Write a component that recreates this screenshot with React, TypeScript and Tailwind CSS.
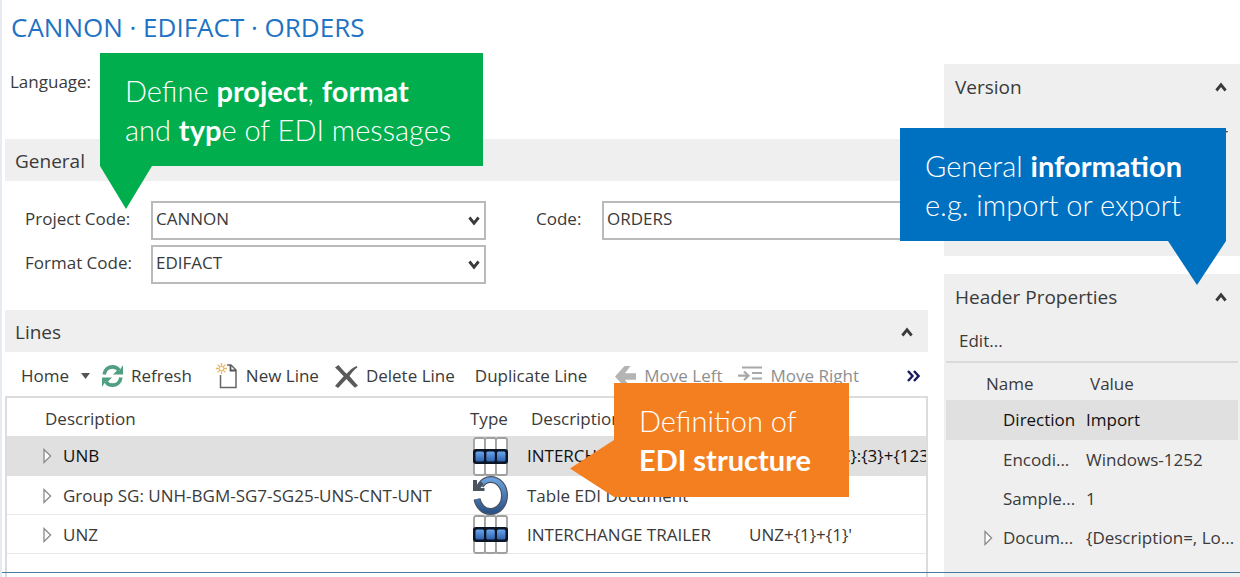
import React from 'react';

const SECTION = 'flex h-[42px] items-center justify-between bg-[#efefef] text-[19px] leading-[26px]';
const TOOL = 'flex items-center gap-2 whitespace-nowrap';
const CALLOUT = "absolute pt-[18px] pl-[25px] font-['Lato',sans-serif] text-[29px] leading-[39px] font-light whitespace-nowrap text-white";

const Chevron: React.FC<{ down?: boolean }> = ({ down }) => (
  <svg
    width="12"
    height="10"
    viewBox="0 0 12 10"
    fill="none"
    stroke="#3a3a3a"
    strokeWidth="2.8"
    className={down ? 'rotate-180' : ''}
  >
    <path d="M1.400 8.500 6 2.800l4.600 5.700" />
  </svg>
);

const Expander: React.FC = () => (
  <svg width="9" height="16" viewBox="0 0 9 16" fill="#fff" stroke="#8a8a8a" strokeWidth="1.3">
    <path d="M1 1.5 7.6 8 1 14.5Z" />
  </svg>
);

const RefreshIcon: React.FC = () => (
  <svg width="21" height="24" viewBox="0 0 22 24" fill="none" stroke="#4f9f80" strokeWidth="3.8">
    <path d="M2.200 10.500C3 5 7 2.400 11 2.400c3 0 5.400 1.300 7 3.900" />
    <path d="M19.800 13.500C19 19 15 21.600 11 21.600c-3 0-5.400-1.300-7-3.900" />
    <path d="M22 .5v10h-10.500l3.800-3.800 3-.5Z" fill="#4f9f80" stroke="none" />
    <path d="M0 23.500v-10h10.500l-3.800 3.800-3 .5Z" fill="#4f9f80" stroke="none" />
  </svg>
);

const NewIcon: React.FC = () => (
  <svg width="22" height="26" viewBox="0 0 22 26" fill="none">
    <path d="M4.500 12v12.500h15.500V7l-5-5h-4" stroke="#666" strokeWidth="1.500" />
    <path d="M14.500 2v5.500H20" stroke="#555" strokeWidth="1.800" />
    <path d="M5.500 0v11M0 5.500h11M1.600 1.600l7.800 7.800M9.400 1.600l-7.800 7.800" stroke="#eab765" strokeWidth="1.300" />
    <circle cx="5.500" cy="5.500" r="2.200" fill="#fff" stroke="#eab765" />
  </svg>
);

const DeleteIcon: React.FC = () => (
  <svg width="23" height="23" viewBox="0 0 23 23" fill="#5a5a5a">
    <path d="M3.500 0C7 4 9 6.500 11.600 8.800 14.500 5.500 17.500 2.800 21.500 1l1 1.200c-3.500 2.800-6 5.600-8 8.800 2.600 3 5 6 8.500 9.500L20 22.800c-3.500-3-6-6-8.500-8.800-3 3-5.500 6-8.300 9L0 21c2.700-3.300 5.500-6.300 8.700-9.700C6 8.500 3.500 5.500 0 2.500Z" />
  </svg>
);

const MoveLeftIcon: React.FC = () => (
  <svg width="21" height="21" viewBox="0 0 21 21" fill="#b4b4b4">
    <path d="M0 10.500 9.500 0h6L10 7.300h11v6.400H10l5.500 7.300h-6Z" />
  </svg>
);

const MoveRightIcon: React.FC = () => (
  <svg width="24" height="20" viewBox="0 0 24 20" fill="none" stroke="#a8a8a8" strokeWidth="1.800">
    <path d="M4 1.500h20M14 7h10M14 12.500h10M4 18h20" />
    <path d="M0 9.700h10M6 5.500l4.500 4.200L6 14" strokeWidth="2.200" />
  </svg>
);

const SegmentIcon: React.FC = () => (
  <svg width="35" height="39" viewBox="0 0 35 39">
    <defs>
      <linearGradient id="cell" x1="0" y1="0" x2="0" y2="1">
        <stop offset="0" stopColor="#6aa5ee" />
        <stop offset="1" stopColor="#2f62ad" />
      </linearGradient>
    </defs>
    <g fill="#fff" stroke="#a0a0a0" strokeWidth="1.800">
      <rect x="1" y="1" width="11" height="37" rx="2" />
      <rect x="12" y="1" width="11" height="37" rx="2" />
      <rect x="23" y="1" width="11" height="37" rx="2" />
    </g>
    <rect y="12" width="35" height="15" rx="3" fill="#0b1526" />
    <g fill="url(#cell)">
      <rect x="2.500" y="14.500" width="8.500" height="10" rx="1.500" />
      <rect x="13.300" y="14.500" width="8.500" height="10" rx="1.500" />
      <rect x="24" y="14.500" width="8.500" height="10" rx="1.500" />
    </g>
  </svg>
);

const LoopIcon: React.FC = () => (
  <svg width="35" height="39" viewBox="0 0 35 39" fill="none">
    <defs>
      <linearGradient id="loop" x1="0" y1="0" x2="0" y2="1">
        <stop offset="0" stopColor="#6ba0dd" />
        <stop offset="1" stopColor="#2c5389" />
      </linearGradient>
    </defs>
    <path d="M7.500 9.500C10.500 5 14 3.500 17.500 3.500c8 0 14 7 14 16s-6 16-14 16c-6.500 0-12-5-13.500-12.500" stroke="#4a5360" strokeWidth="7" />
    <path d="M7.500 9.500C10.500 5 14 3.500 17.500 3.500c8 0 14 7 14 16s-6 16-14 16c-6.500 0-12-5-13.500-12.500" stroke="url(#loop)" strokeWidth="4.600" />
    <path d="M0 4v11h11.500v-3H7.500l3-4-2.500-2.500L4 8.500V4Z" fill="#4a5360" />
  </svg>
);

const lines = [
  { name: 'UNB', icon: <SegmentIcon />, description: 'INTERCHANGE', text: 'UNB+{UNOC}:{3}+{123', selected: true },
  { name: 'Group SG: UNH-BGM-SG7-SG25-UNS-CNT-UNT', icon: <LoopIcon />, description: 'Table EDI Document', text: '' },
  { name: 'UNZ', icon: <SegmentIcon />, description: 'INTERCHANGE TRAILER', text: "UNZ+{1}+{1}'" },
];

const properties = [
  { name: 'Direction', value: 'Import', selected: true },
  { name: 'Encodi...', value: 'Windows-1252' },
  { name: 'Sample...', value: '1' },
  { name: 'Docum...', value: '{Description=, Lo...', expandable: true },
];

const SelectField: React.FC<{ id: string; label: string; value: string }> = ({ id, label, value }) => (
  <>
    <label htmlFor={id} className="pb-1">{label}</label>
    <div className="relative">
      <select
        id={id}
        defaultValue={value}
        className="block h-[39px] w-full appearance-none border-2 border-[#bababa] bg-white px-[3px] pb-1"
      >
        <option>{value}</option>
      </select>
      <span className="pointer-events-none absolute inset-y-0 right-[6px] flex items-center">
        <Chevron down />
      </span>
    </div>
  </>
);

export default function App() {
  return (
    <div className="relative overflow-hidden border-l-2 border-[#e6ebf1] bg-white pl-[3px] font-['Open_Sans','Noto_Sans',sans-serif] text-[17px] leading-[24px] text-[#3a3a3a]">
      <h1 className="h-[64px] pt-2 pl-[6px] text-[26px] leading-[38px] text-[#1e73c4]">
        CANNON · EDIFACT · ORDERS
      </h1>

      <div className="flex gap-4">
        <main className="min-w-0 flex-1">
          <div className="h-[75px] pt-[6px] pl-[5px]">Language:</div>

          {/* General */}
          <section>
            <h2 className={`${SECTION} pt-[2px] pl-[10px]`}>General</h2>
            <div className="flex items-start pt-5 pb-[26px] pl-5">
              <div className="grid w-[461px] grid-cols-[126px_1fr] items-center gap-y-[5px]">
                <SelectField id="project" label="Project Code:" value="CANNON" />
                <SelectField id="format" label="Format Code:" value="EDIFACT" />
              </div>
              <div className="ml-[50px] flex min-w-0 flex-1 items-center pr-5">
                <label htmlFor="code" className="w-[66px] pb-1">Code:</label>
                <input
                  id="code"
                  defaultValue="ORDERS"
                  className="h-[39px] min-w-0 flex-1 border-2 border-[#bababa] px-[3px] pb-1"
                />
              </div>
            </div>
          </section>

          {/* Lines */}
          <section>
            <div className={`${SECTION} pt-[2px] pr-[15px] pl-[10px]`}>
              <h2>Lines</h2>
              <button aria-label="Collapse lines"><Chevron /></button>
            </div>
            <div className="flex h-[44px] items-center pt-1 pr-2 pl-4">
              <button className={`${TOOL} gap-3`}>
                <span>Home</span>
                <svg width="9" height="6" viewBox="0 0 9 6" fill="#555"><path d="M0 0h9L4.500 6Z" /></svg>
              </button>
              <button className={`${TOOL} ml-3`}><RefreshIcon />Refresh</button>
              <button className={`${TOOL} ml-6`}><NewIcon />New Line</button>
              <button className={`${TOOL} ml-4`}><DeleteIcon />Delete Line</button>
              <button className={`${TOOL} ml-5`}>Duplicate Line</button>
              <button className={`${TOOL} ml-7 text-[#8f8f8f]`}><MoveLeftIcon />Move Left</button>
              <button className={`${TOOL} ml-4 text-[#8f8f8f]`}><MoveRightIcon />Move Right</button>
              <button aria-label="More actions" className="ml-auto">
                <svg width="13" height="12" viewBox="0 0 13 12" fill="none" stroke="#1a1a5e" strokeWidth="2.400">
                  <path d="M1 1l4.500 5L1 11M7 1l4.500 5L7 11" />
                </svg>
              </button>
            </div>
            <div className="h-[181px] overflow-hidden border-2 border-b-0 border-[#dcdcdc]">
              <table className="w-full table-fixed text-left whitespace-nowrap">
                <colgroup>
                  <col className="w-[456px]" />
                  <col className="w-[58px]" />
                  <col className="w-[222px]" />
                  <col />
                </colgroup>
                <thead>
                  <tr className="h-[38px]">
                    <th className="pt-1 pl-[38px] font-normal">Description</th>
                    <th className="pt-1 pl-[7px] font-normal">Type</th>
                    <th className="pt-1 pl-[10px] font-normal">Description</th>
                    <th></th>
                  </tr>
                </thead>
                <tbody>
                  {lines.map((line) => (
                    <tr
                      key={line.name}
                      className={line.selected ? 'h-[40px] bg-[#e0e0e0] text-[#111]' : 'h-[39px] shadow-[inset_0_-1px_0_#e8e8e8]'}
                    >
                      <td className="p-0 pl-9">
                        <div className="flex items-center gap-[11px]">
                          <Expander />
                          {line.name}
                        </div>
                      </td>
                      <td className="p-0 pl-[10px]">{line.icon}</td>
                      <td className="p-0 pl-[6px]">{line.description}</td>
                      <td className="p-0 pl-[6px]">{line.text}</td>
                    </tr>
                  ))}
                </tbody>
              </table>
            </div>
          </section>
        </main>

        <aside className="flex w-[296px] flex-col gap-[18px]">
          <section className="h-[192px] bg-[#efefef]">
            <div className={`${SECTION} pt-1 pr-[13px] pl-[11px]`}>
              <h2>Version</h2>
              <button aria-label="Collapse version"><Chevron /></button>
            </div>
            <div className="pt-4 pr-3 text-right">Group Number</div>
          </section>

          <section className="flex-1 bg-[#efefef]">
            <div className={`${SECTION} pt-1 pr-[13px] pl-[11px]`}>
              <h2>Header Properties</h2>
              <button aria-label="Collapse header properties"><Chevron /></button>
            </div>
            <div className="flex h-[45px] items-center pt-1 pl-[15px]">
              <button>Edit...</button>
            </div>
            <table className="ml-[2px] w-[292px] table-fixed border-t-2 border-[#dadada] text-left whitespace-nowrap">
              <colgroup>
                <col className="w-[136px]" />
                <col />
              </colgroup>
              <thead>
                <tr className="h-[38px]">
                  <th className="pt-1 pl-10 font-normal">Name</th>
                  <th className="pt-1 pl-2 font-normal">Value</th>
                </tr>
              </thead>
              <tbody>
                {properties.map((property) => (
                  <tr key={property.name} className={property.selected ? 'h-[40px] bg-[#e0e0e0] text-[#111]' : 'h-[39px]'}>
                    <td className="p-0 pl-[38px]">
                      <div className="flex items-center gap-[10px]">
                        {property.expandable ? <Expander /> : <span className="w-[9px]" />}
                        {property.name}
                      </div>
                    </td>
                    <td className="p-0 pl-1">{property.value}</td>
                  </tr>
                ))}
              </tbody>
            </table>
          </section>
        </aside>
      </div>

      <div className="absolute inset-x-0 bottom-[4px] h-px bg-[#4a7a9c]" />

      {/* Callouts */}
      <div className={`${CALLOUT} top-[53px] left-[98px] h-[113px] w-[383px] bg-[#00ae4d]`}>
        Define <b className="font-bold">project</b>, <b className="font-bold">format</b>
        <br />
        and <b className="font-bold">typ</b>e of EDI messages
        <span className="absolute top-full left-0 h-[43px] w-[52px] bg-[#00ae4d] [clip-path:polygon(0_0,100%_0,50%_100%)]" />
      </div>
      <div className={`${CALLOUT} top-[128px] right-[14px] h-[113px] w-[326px] bg-[#0070c0]`}>
        General <b className="font-bold">information</b>
        <br />
        e.g. import or export
        <span className="absolute top-full right-0 h-[44px] w-[58px] bg-[#0070c0] [clip-path:polygon(0_0,100%_0,50%_100%)]" />
      </div>
      <div className={`${CALLOUT} top-[383px] left-[612px] h-[114px] w-[235px] bg-[#f47f20]`}>
        Definition of
        <br />
        <b className="font-bold">EDI structure</b>
        <span className="absolute right-full bottom-0 h-[57px] w-[44px] bg-[#f47f20] [clip-path:polygon(100%_0,100%_100%,0_50%)]" />
      </div>
    </div>
  );
}
